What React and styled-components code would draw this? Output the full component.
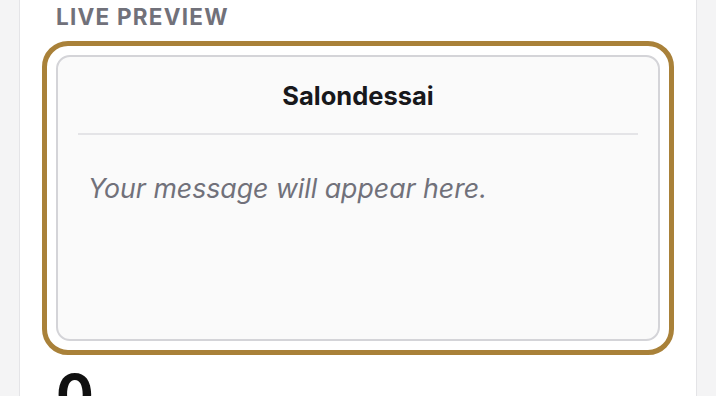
import React from "react";
import styled, { createGlobalStyle } from "styled-components";

const Global = createGlobalStyle`
  html, body { margin: 0; padding: 0; background: #f4f4f5; }
  body { font-family: Inter, "Noto Sans", sans-serif; overflow: hidden; }
`;

const Page = styled.div`
  display: flex;
  height: 396px;
  padding-left: 19px;
  width: 716px;
  box-sizing: border-box;
  overflow: hidden;
`;

const Panel = styled.section`
  width: 678px;
  box-sizing: border-box;
  background: #ffffff;
  border-left: 1px solid #e4e4e7;
  border-right: 1px solid #e4e4e7;
  padding: 3px 22px 0 22px;
  display: flex;
  flex-direction: column;
`;

const Label = styled.div`
  flex-shrink: 0;
  font-size: 22.5px;
  font-weight: 700;
  letter-spacing: 0.055em;
  color: #71717a;
  text-transform: uppercase;
  line-height: 27px;
  padding-left: 14px;
`;

const Ring = styled.div`
  flex-shrink: 0;
  margin-top: 11px;
  border: 5px solid #a98139;
  border-radius: 26px;
  padding: 9px;
  height: 314px;
  box-sizing: border-box;
`;

const Card = styled.div`
  height: 100%;
  box-sizing: border-box;
  border: 2px solid #d4d4d8;
  border-radius: 14px;
  background: #fafafa;
  padding: 0 20px;
  display: flex;
  flex-direction: column;
`;

const Header = styled.div`
  height: 76px;
  flex-shrink: 0;
  display: flex;
  align-items: center;
  justify-content: center;
  border-bottom: 2px solid #e4e4e7;
  font-size: 25.5px;
  font-weight: 700;
  color: #18181b;
`;

const Message = styled.p`
  margin: 0;
  padding: 36px 10px 0;
  font-size: 26.7px;
  font-style: italic;
  color: #71717a;
  line-height: 34px;
`;

const Count = styled.div`
  flex-shrink: 0;
  padding-left: 14px;
  margin-top: 12px;
  font-size: 56px;
  font-weight: 700;
  color: #111111;
  line-height: 1;
`;

export default function App() {
  return (
    <>
      <Global />
      <Page>
        <Panel>
          <Label>Live Preview</Label>
          <Ring>
            <Card>
              <Header>Salondessai</Header>
              <Message>Your message will appear here.</Message>
            </Card>
          </Ring>
          <Count>0</Count>
        </Panel>
      </Page>
    </>
  );
}
